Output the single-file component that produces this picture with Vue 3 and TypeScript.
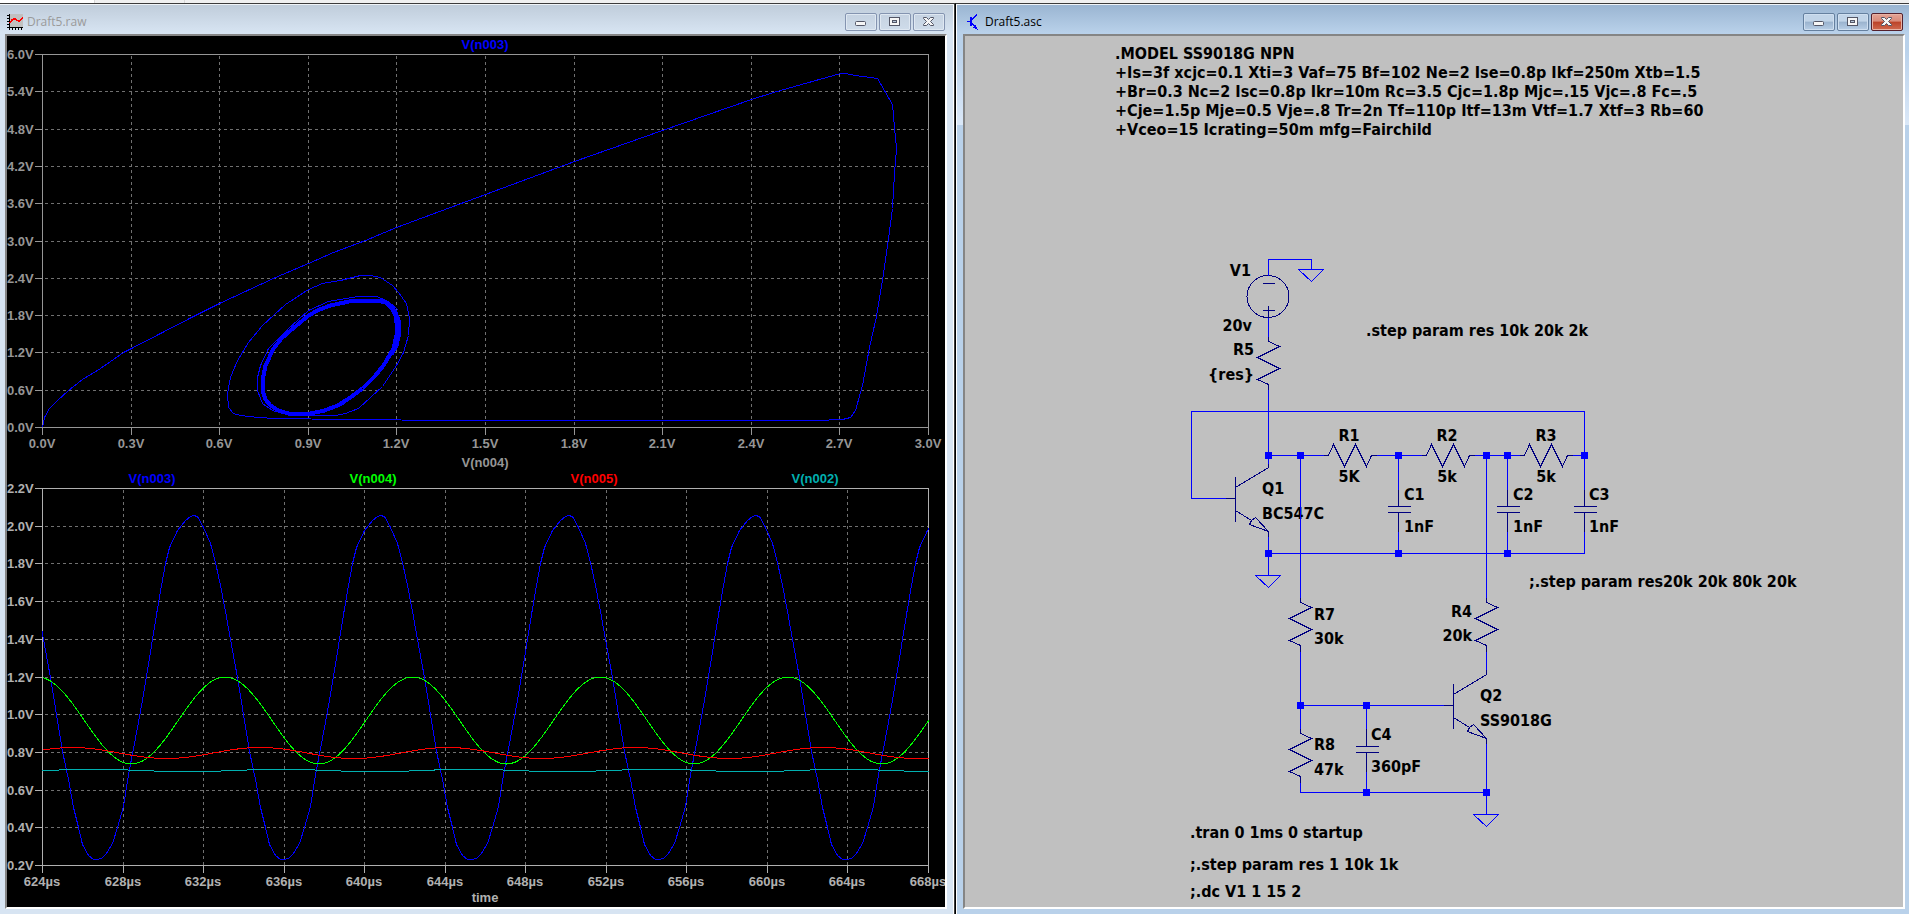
<script setup lang="ts">
type Point = [number, number]

interface Axis {
  left: number
  right: number
  top: number
  bottom: number
  xLabels: string[]
  yLabels: string[]
}

const voltages = (from: number, step: number, count: number): string[] =>
  Array.from({ length: count }, (_, i) => `${Math.abs(from + step * i).toFixed(1)}V`)

const phaseAxis: Axis = {
  left: 42, right: 928, top: 54, bottom: 427,
  xLabels: voltages(0, 0.3, 11),
  yLabels: voltages(6, -0.6, 11),
}

const timeAxis: Axis = {
  left: 42, right: 928, top: 488, bottom: 865,
  xLabels: Array.from({ length: 12 }, (_, i) => `${624 + 4 * i}µs`),
  yLabels: voltages(2.2, -0.2, 11),
}

const axes = [
  { name: 'phase', axis: phaseAxis },
  { name: 'time', axis: timeAxis },
]

const spread = (from: number, to: number, count: number): number[] =>
  Array.from({ length: count }, (_, i) => Math.round(from + ((to - from) * i) / (count - 1)))

const columns = (a: Axis): number[] => spread(a.left, a.right, a.xLabels.length)
const rows = (a: Axis): number[] => spread(a.top, a.bottom, a.yLabels.length)

const line = (points: Point[]): string => points.map(([x, y]) => `${x},${y}`).join(' ')

/* start-up spiral of V(n003) against V(n004) */
const spiral: Point[] = [
  [42, 427], [44, 417], [49, 408], [57, 400], [68, 390], [82, 379], [100, 368], [123, 352], [131, 348],
  [160, 333], [193, 316], [219, 303], [247, 290], [275, 277], [308, 263], [333, 252], [365, 240], [396, 227],
  [458, 204], [485, 194], [574, 161], [662, 130], [751, 99], [773, 92], [840, 73], [845, 73], [855, 75],
  [877, 78], [892, 104], [894, 127], [896, 148], [894, 173], [892, 208], [888, 238], [882, 280], [876, 316],
  [869, 347], [862, 385], [855, 410], [850, 417], [842, 419], [815, 420], [455, 420], [346, 419], [274, 418],
  [258, 417], [240, 415], [233, 413], [228, 407], [227, 393], [230, 377], [237, 360], [248, 342], [262, 325],
  [285, 304], [308, 289], [322, 283], [340, 280], [360, 275], [370, 275], [380, 277], [392, 285], [398, 292],
  [406, 303], [409, 318], [408, 335], [403, 352], [396, 365], [382, 386], [358, 408], [345, 413], [335, 415],
  [290, 415], [272, 410], [262, 403], [257, 390], [257, 377], [260, 365], [268, 348], [287, 329], [308, 310],
  [328, 301], [357, 296], [376, 296], [388, 301], [398, 310],
]

/* limit cycle, traced over and over */
const cycle: Point[] = [
  [377, 300], [385, 302], [391, 307], [395, 315], [397, 330], [393, 348], [383, 365], [374, 376], [362, 388],
  [350, 397], [337, 405], [324, 410], [310, 413], [288, 413], [278, 410], [270, 405], [265, 399], [262, 390],
  [262, 380], [265, 365], [273, 348], [281, 338], [290, 330], [308, 315], [319, 309], [330, 305], [353, 300],
]
const cycleDrift: Point[] = [
  [387, 304], [394, 310], [398, 319], [399, 332], [396, 345], [391, 354],
]
const cycleInner: Point[] = [
  [345, 403], [328, 410], [310, 414], [284, 413], [272, 408], [264, 398],
]

/* one oscillation period of V(n003), x relative to its trough */
const period = 187
const swing: Point[] = [
  [0, 859], [5, 858], [10, 853], [16, 843], [21, 827], [27, 806], [32, 774], [38, 743], [44, 711], [50, 676],
  [55, 645], [60, 614], [65, 585], [69, 563], [73, 547], [81, 530], [89, 520], [94, 516], [97, 515], [101, 516],
  [107, 527], [114, 543], [119, 562], [124, 585], [129, 611], [134, 639], [141, 677], [147, 714], [153, 751],
  [159, 779], [164, 807], [169, 827], [173, 844], [179, 855], [184, 859],
]
const troughs = [-91, 96, 283, 471, 658, 846]
const collector: Point[] = troughs.flatMap((t) => swing.map(([x, y]): Point => [t + x, y]))

const wave = (peak: number, middle: number, amplitude: number): Point[] => {
  const points: Point[] = []
  for (let x = 42; x <= 930; x += 4) {
    points.push([x, middle - amplitude * Math.cos(((x - peak) / (period + 0.6)) * 2 * Math.PI)])
  }
  return points
}

const traces = [
  { label: 'V(n003)', tone: 'blue', x: 152, points: line(collector) },
  { label: 'V(n004)', tone: 'green', x: 373, points: line(wave(37, 720, 43.5)) },
  { label: 'V(n005)', tone: 'red', x: 594, points: line(wave(72, 752.5, 5.5)) },
  { label: 'V(n002)', tone: 'teal', x: 815, points: line(wave(93, 770, 1.2)) },
]

/* schematic */
const wires = [
  'M1268 275V259H1311V269', 'M1268 317V336', 'M1268 389V463', 'M1225 498H1191V411H1584V489',
  'M1268 455H1323', 'M1376 455H1421', 'M1474 455H1519', 'M1572 455H1584',
  'M1300 455V597', 'M1486 455V597', 'M1398 455V489', 'M1507 455V489',
  'M1268 536V575', 'M1268 553H1584V531', 'M1398 531V553', 'M1507 531V553',
  'M1300 651V728', 'M1300 705H1443', 'M1366 705V728', 'M1366 771V792', 'M1300 782V792H1486',
  'M1486 651V669', 'M1486 743V814',
]
const nodes: Point[] = [
  [1268, 455], [1300, 455], [1398, 455], [1486, 455], [1507, 455], [1584, 455],
  [1268, 553], [1398, 553], [1507, 553],
  [1300, 705], [1366, 705], [1366, 792], [1486, 792],
]
const grounds: Point[] = [[1311, 269], [1268, 575], [1486, 814]]
const uprightResistors: Point[] = [[1268, 341], [1300, 602], [1300, 733], [1486, 602]]
const flatResistors: Point[] = [[1328, 455], [1426, 455], [1524, 455]]
const capacitors: Point[] = [[1398, 506], [1507, 506], [1584, 506], [1366, 746]]
const transistors: Point[] = [[1235, 498], [1453, 705]]

interface Label {
  text: string
  x: number
  y: number
  align?: 'end' | 'middle'
}

const labels: Label[] = [
  { text: '.MODEL SS9018G NPN', x: 1115, y: 59 },
  { text: '+Is=3f xcjc=0.1 Xti=3 Vaf=75 Bf=102 Ne=2 Ise=0.8p Ikf=250m Xtb=1.5', x: 1115, y: 78 },
  { text: '+Br=0.3 Nc=2 Isc=0.8p Ikr=10m Rc=3.5 Cjc=1.8p Mjc=.15 Vjc=.8 Fc=.5', x: 1115, y: 97 },
  { text: '+Cje=1.5p Mje=0.5 Vje=.8 Tr=2n Tf=110p Itf=13m Vtf=1.7 Xtf=3 Rb=60', x: 1115, y: 116 },
  { text: '+Vceo=15 Icrating=50m mfg=Fairchild', x: 1115, y: 135 },
  { text: 'V1', x: 1251, y: 276, align: 'end' },
  { text: '20v', x: 1252, y: 331, align: 'end' },
  { text: 'R5', x: 1254, y: 355, align: 'end' },
  { text: '{res}', x: 1254, y: 380, align: 'end' },
  { text: '.step param res 10k 20k 2k', x: 1366, y: 336 },
  { text: 'R1', x: 1349, y: 441, align: 'middle' },
  { text: '5K', x: 1349, y: 482, align: 'middle' },
  { text: 'R2', x: 1447, y: 441, align: 'middle' },
  { text: '5k', x: 1447, y: 482, align: 'middle' },
  { text: 'R3', x: 1546, y: 441, align: 'middle' },
  { text: '5k', x: 1546, y: 482, align: 'middle' },
  { text: 'Q1', x: 1262, y: 494 },
  { text: 'BC547C', x: 1262, y: 519 },
  { text: 'C1', x: 1404, y: 500 },
  { text: '1nF', x: 1404, y: 532 },
  { text: 'C2', x: 1513, y: 500 },
  { text: '1nF', x: 1513, y: 532 },
  { text: 'C3', x: 1589, y: 500 },
  { text: '1nF', x: 1589, y: 532 },
  { text: ';.step param res20k 20k 80k 20k', x: 1529, y: 587 },
  { text: 'R7', x: 1314, y: 620 },
  { text: '30k', x: 1314, y: 644 },
  { text: 'R4', x: 1472, y: 617, align: 'end' },
  { text: '20k', x: 1472, y: 641, align: 'end' },
  { text: 'Q2', x: 1480, y: 701 },
  { text: 'SS9018G', x: 1480, y: 726 },
  { text: 'C4', x: 1371, y: 740 },
  { text: '360pF', x: 1371, y: 772 },
  { text: 'R8', x: 1314, y: 750 },
  { text: '47k', x: 1314, y: 775 },
  { text: '.tran 0 1ms 0 startup', x: 1190, y: 838 },
  { text: ';.step param res 1 10k 1k', x: 1190, y: 870 },
  { text: ';.dc V1 1 15 2', x: 1190, y: 897 },
]

const controls = ['Minimize', 'Maximize', 'Close']
</script>

<template>
  <div class="desktop">
    <div class="strip"></div>
    <main class="windows">
      <section class="window plot-window" aria-label="Draft5.raw">
        <header class="titlebar">
          <svg class="app-icon" viewBox="0 0 16 16" aria-hidden="true">
            <rect x="2" y="0" width="14" height="14" fill="#c0c0c0" />
            <path d="M2.5 0V16M0 13.5H16M0 1.5H2M0 4.5H2M0 7.5H2M0 10.5H2M5.5 14V16M8.5 14V16M11.5 14V16M14.5 14V16" stroke="#000" fill="none" />
            <path d="M3 9L5 6L8 4.5L10 6.5L12 7L14 5.5L16 3.5" stroke="#f00" stroke-width="1.5" fill="none" />
          </svg>
          <h1>Draft5.raw</h1>
          <div class="controls">
            <button v-for="c in controls" :key="c" type="button" :class="c.toLowerCase()" :aria-label="c">
              <svg viewBox="0 0 11 9" aria-hidden="true">
                <rect v-if="c === 'Minimize'" class="glyph" x="0.5" y="4.5" width="10" height="4" rx="1" />
                <g v-else-if="c === 'Maximize'">
                  <rect class="glyph" x="0.5" y="0.5" width="10" height="8" />
                  <rect class="glyph hole" x="3.5" y="3.5" width="4" height="2" />
                </g>
                <path v-else class="glyph" d="M0.5 0.5H3.5L5.5 2.5L7.5 0.5H10.5V1.5L7.5 4.5L10.5 7.5V8.5H7.5L5.5 6.5L3.5 8.5H0.5V7.5L3.5 4.5L0.5 1.5Z" />
              </svg>
            </button>
          </div>
        </header>
        <div class="client plot-client">
          <svg class="canvas" viewBox="7 36 938 871" role="img" aria-label="Waveforms">
            <clipPath id="time-area"><rect x="42" y="488" width="887" height="378" /></clipPath>
            <g v-for="p in axes" :key="p.name" :class="['axis', p.name]">
              <g transform="translate(0.5 0.5)">
                <path v-for="x in columns(p.axis).slice(1, -1)" :key="'c' + x" class="grid" :d="`M${x} ${p.axis.top + 1}V${p.axis.bottom}`" />
                <path v-for="y in rows(p.axis).slice(1, -1)" :key="'r' + y" class="grid" :d="`M${p.axis.left + 2} ${y}H${p.axis.right}`" />
                <rect class="frame" :x="p.axis.left" :y="p.axis.top" :width="p.axis.right - p.axis.left" :height="p.axis.bottom - p.axis.top" />
                <path v-for="x in columns(p.axis)" :key="'tx' + x" class="frame" :d="`M${x} ${p.axis.bottom}v7.5`" />
                <path v-for="y in rows(p.axis)" :key="'ty' + y" class="frame" :d="`M${p.axis.left} ${y}h-7.5`" />
              </g>
              <text v-for="(y, i) in rows(p.axis)" :key="'ly' + y" x="7" :y="y + 5">{{ p.axis.yLabels[i] }}</text>
              <text v-for="(x, i) in columns(p.axis)" :key="'lx' + x" class="middle" :x="x" :y="p.axis.bottom + 21">{{ p.axis.xLabels[i] }}</text>
            </g>
            <text class="middle blue" x="485" y="49">V(n003)</text>
            <text class="middle phase-name" x="485" y="467">V(n004)</text>
            <text class="middle time-name" x="485" y="902">time</text>
            <g transform="translate(0.5 0.5)">
              <polyline class="trace blue" :points="line(spiral)" />
              <polygon class="trace blue heavy" :points="line(cycle)" />
              <polyline class="trace blue heavy" :points="line(cycleDrift)" />
              <polyline class="trace blue" :points="line(cycleInner)" />
            </g>
            <text v-for="t in traces" :key="t.label" :class="['middle', t.tone]" :x="t.x" y="483">{{ t.label }}</text>
            <g clip-path="url(#time-area)">
              <polyline v-for="t in traces" :key="t.tone" :class="['trace', t.tone]" :points="t.points" transform="translate(0.5 0.5)" />
            </g>
          </svg>
        </div>
      </section>

      <section class="window schematic-window" aria-label="Draft5.asc">
        <header class="titlebar">
          <svg class="app-icon" viewBox="0 0 16 16" aria-hidden="true">
            <path d="M2 7.5H6" stroke="#00f" />
            <path d="M6 3V12" stroke="#00f" stroke-width="2" />
            <path d="M7 5.5L12 0.5M7 9.5L12 14.5" stroke="#00f" />
            <path d="M13 16L8 13.5L10.5 11Z" fill="#00f" />
          </svg>
          <h1>Draft5.asc</h1>
          <div class="controls">
            <button v-for="c in controls" :key="c" type="button" :class="c.toLowerCase()" :aria-label="c">
              <svg viewBox="0 0 11 9" aria-hidden="true">
                <rect v-if="c === 'Minimize'" class="glyph" x="0.5" y="4.5" width="10" height="4" rx="1" />
                <g v-else-if="c === 'Maximize'">
                  <rect class="glyph" x="0.5" y="0.5" width="10" height="8" />
                  <rect class="glyph hole" x="3.5" y="3.5" width="4" height="2" />
                </g>
                <path v-else class="glyph" d="M0.5 0.5H3.5L5.5 2.5L7.5 0.5H10.5V1.5L7.5 4.5L10.5 7.5V8.5H7.5L5.5 6.5L3.5 8.5H0.5V7.5L3.5 4.5L0.5 1.5Z" />
              </svg>
            </button>
          </div>
        </header>
        <div class="client schematic-client">
          <svg class="canvas" viewBox="965 36 938 871" role="img" aria-label="Schematic">
            <text v-for="(l, i) in labels" :key="i" :class="l.align" :x="l.x" :y="l.y">{{ l.text }}</text>
            <g class="drawing" transform="translate(0.5 0.5)">
              <g class="part">
                <circle cx="1267.5" cy="296" r="21" />
                <path d="M1262 283H1274M1262 310H1274M1268 305V318" />
                <g v-for="[x, y] in uprightResistors" :key="`u${x}-${y}`" :transform="`translate(${x} ${y})`">
                  <path d="M0 -5V0L11 5L-11 16L11 27L-11 38L0 43V49" />
                </g>
                <g v-for="[x, y] in flatResistors" :key="`f${x}`" :transform="`translate(${x} ${y})`">
                  <path d="M-5 0H0L5 -11L16 11L27 -11L38 11L43 0H49" />
                </g>
                <g v-for="[x, y] in capacitors" :key="`k${x}`" :transform="`translate(${x} ${y})`">
                  <path d="M0 -18V0M-11 0H12M-11 6H12M0 6V25" />
                </g>
                <g v-for="[x, y] in transistors" :key="`q${x}`" :transform="`translate(${x} ${y})`">
                  <path d="M-10 0H0M0 -22V23M0 -11L33 -31V-36M0 12L16 22M33 33V38M16 22L20 19L33 33L14 26Z" />
                </g>
              </g>
              <path v-for="w in wires" :key="w" class="wire" :d="w" />
              <path v-for="[x, y] in grounds" :key="`g${x}`" class="wire" :d="`M${x - 13} ${y}H${x + 12}L${x} ${y + 12}Z`" />
            </g>
            <rect v-for="[x, y] in nodes" :key="`n${x}-${y}`" class="node" :x="x - 3" :y="y - 3" width="7" height="7" />
          </svg>
        </div>
      </section>
    </main>
  </div>
</template>

<style>
body {
  margin: 0;
  background: #f0f0f0;
}
</style>

<style scoped>
.desktop {
  min-height: 100vh;
  display: flex;
  flex-direction: column;
  background: #f0f0f0;
}

.strip {
  height: 3px;
  background: linear-gradient(90deg, #fff 94px, #d8d8d8 94px 95px, #f0f0f0 95px 184px, #d8d8d8 184px 185px, #f0f0f0 185px);
}

.windows {
  flex: 1;
  display: flex;
}

.window {
  box-sizing: border-box;
  min-width: 0;
  display: flex;
  flex-direction: column;
  border-top: 1px solid #3c3c3c;
}

.plot-window {
  flex: 1 1 955px;
  padding: 1px 7px 5px 5px;
  border-right: 1px solid #3c3c3c;
  box-shadow: inset 0 1px #f0f4f8, inset -1px 0 #fff;
  background: linear-gradient(#bfccda 0, #d7e4f2 29px);
}

.schematic-window {
  flex: 1 1 954px;
  padding: 1px 4px 5px 7px;
  border-left: 1px solid #000;
  box-shadow: inset 0 1px #f0f4f8, inset 1px 0 #fff;
  background: linear-gradient(#99b4d1 0, #b9d1ea 29px, #b9d1ea 45px, #dbe8f8 121px, #b9d1ea 121px);
}

.titlebar {
  display: flex;
  align-items: center;
  gap: 4px;
  height: 24px;
  padding: 5px 2px 0;
}

.app-icon {
  width: 16px;
  height: 16px;
  shape-rendering: crispEdges;
}

h1 {
  flex: 1;
  margin: 0;
  font: 400 12px/16px "Open Sans", "Noto Sans", sans-serif;
  color: #000;
}

.plot-window h1 {
  color: #9a9a9a;
}

.controls {
  display: flex;
  gap: 2px;
}

button {
  box-sizing: border-box;
  width: 32px;
  height: 18px;
  padding: 3px 0 0 9px;
  display: flex;
  align-items: flex-start;
  border: 1px solid #8494b0;
  border-radius: 2px;
  background: linear-gradient(#c5d2e1, #cfdcea);
  box-shadow: inset 0 0 0 1px #dfe8f2;
}

.schematic-window button {
  border-color: #65809f;
  background: linear-gradient(#c1d4e8 0 45%, #9ab3ce 50%, #b8cfe7);
  box-shadow: inset 0 0 0 1px #cfdff0;
}

.schematic-window button.close {
  border-color: #54202c;
  background: linear-gradient(#e3a396 0, #d98a79 45%, #bb4228 50%, #d0694f);
  box-shadow: inset 0 0 0 1px #e8b2a4;
}

button svg {
  width: 11px;
  height: 9px;
}

.glyph {
  fill: #f6f6f6;
  stroke: #535666;
}

.hole {
  fill: #b5c5d8;
}

.client {
  flex: 1;
  border: 2px solid;
  border-color: #858585 #fff #fff #858585;
}

.plot-client {
  background: #000;
}

.schematic-client {
  background: #c0c0c0;
}

.canvas {
  display: block;
  width: 100%;
  height: auto;
}

.plot-client text {
  font: 700 13px "Liberation Sans", Arial, sans-serif;
}

.phase text,
.phase-name {
  fill: #969696;
}

.time text,
.time-name {
  fill: #b0b0b0;
}

.phase .frame {
  stroke: #969696;
}

.time .frame {
  stroke: #b0b0b0;
}

.frame,
.grid,
.trace {
  fill: none;
  shape-rendering: crispEdges;
}

.grid {
  stroke: #707070;
  stroke-dasharray: 3 3;
}

text.middle {
  text-anchor: middle;
}

text.end {
  text-anchor: end;
}

text.blue {
  fill: #00f;
}

text.green {
  fill: #0f0;
}

text.red {
  fill: #f00;
}

text.teal {
  fill: #00b0b0;
}

.trace {
  stroke-width: 1;
}

.trace.blue {
  stroke: #00f;
}

.trace.green {
  stroke: #0f0;
}

.trace.red {
  stroke: #f00;
}

.trace.teal {
  stroke: #00b0b0;
}

.trace.heavy {
  stroke-width: 4;
}

.schematic-client text {
  font: 700 16px "DejaVu Sans Condensed", "Noto Sans", sans-serif;
  fill: #000;
}

.drawing {
  fill: none;
  shape-rendering: crispEdges;
}

.part {
  stroke: #000080;
}

.wire {
  stroke: #00f;
}

.node {
  fill: #00f;
}
</style>
